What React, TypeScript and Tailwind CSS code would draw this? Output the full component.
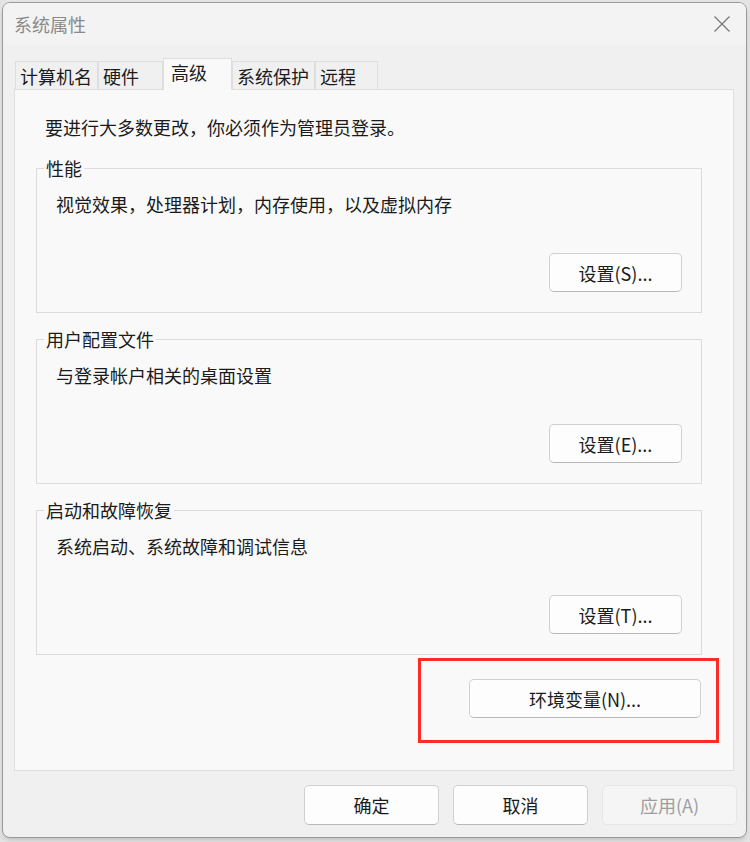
import React from "react";

const font = { fontFamily: '"Noto Sans CJK SC", "Microsoft YaHei", sans-serif' };

function WinButton({
  label,
  className = "",
  disabled = false,
}: {
  label: string;
  className?: string;
  disabled?: boolean;
}) {
  return (
    <button
      disabled={disabled}
      className={
        "flex items-center justify-center rounded-[5px] border text-[18px] leading-none " +
        (disabled
          ? "border-[#e6e6e6] bg-[#f5f5f5] text-[#9d9d9d] "
          : "border-[#d0d0d0] border-b-[#b8b8b8] bg-[#fdfdfd] text-[#1b1b1b] ") +
        className
      }
    >
      {label}
    </button>
  );
}

function Group({
  title,
  desc,
  button,
}: {
  title: string;
  desc: string;
  button: string;
}) {
  return (
    <fieldset className="w-[666px] border border-[#dcdcdc] px-0 pb-[20px] pt-0">
      <legend className="ml-[7px] px-[2px] text-[18px] leading-[24px] text-[#1b1b1b]">
        {title}
      </legend>
      <p className="ml-[19px] mt-[12px] text-[18px] leading-[24px] text-[#1b1b1b]">{desc}</p>
      <div className="mt-[37px] flex justify-end pr-[19px]">
        <WinButton label={button} className="h-[39px] w-[133px]" />
      </div>
    </fieldset>
  );
}

const tabs = ["计算机名", "硬件", "高级", "系统保护", "远程"];
const tabWidths = ["w-[83px]", "w-[65px]", "w-[69px]", "w-[83px]", "w-[63px]"];

export default function App() {
  return (
    <div className="min-h-[842px] w-[750px] bg-[#e4e4e4] pl-[2px] pt-[2px]" style={font}>
      <div className="flex h-[836px] w-[745px] flex-col overflow-hidden rounded-[8px] border border-[#9a9a9a] bg-[#f0f0f0] shadow-md">
        {/* title bar */}
        <div className="flex h-[42px] shrink-0 items-center justify-between bg-[#f3f3f3] pl-[11px] pr-[15px]">
          <span className="text-[18px] text-[#8a8a8a]">系统属性</span>
          <svg width="18" height="18" viewBox="0 0 18 18" className="text-[#7a7a7a]">
            <path d="M1.5 1.5 L16.5 16.5 M16.5 1.5 L1.5 16.5" stroke="currentColor" strokeWidth="1.3" />
          </svg>
        </div>

        {/* tabs */}
        <div className="mt-[13px] flex h-[31px] items-end pl-[12px]">
          {tabs.map((t, i) => {
            const active = i === 2;
            return (
              <div
                key={t}
                className={
                  "relative flex items-start border border-b-0 border-[#dedede] px-[4px] text-[18px] leading-[24px] text-[#1b1b1b] " +
                  tabWidths[i] +
                  (active
                    ? " z-10 -mb-px h-[32px] bg-[#f9f9f9] pl-[7px] pt-[1px]"
                    : " h-[28px] bg-[#f0f0f0] pt-[2px]")
                }
              >
                {t}
              </div>
            );
          })}
        </div>

        {/* panel */}
        <div className="relative ml-[11px] flex h-[682px] w-[720px] flex-col border border-[#dedede] bg-[#f9f9f9] pl-[21px]">
          <p className="mt-[25px] pl-[9px] text-[18px] leading-[24px] text-[#1b1b1b]">
            要进行大多数更改，你必须作为管理员登录。
          </p>
          <div className="mt-[17px] flex flex-col gap-[14px]">
            <Group title="性能" desc="视觉效果，处理器计划，内存使用，以及虚拟内存" button="设置(S)..." />
            <Group title="用户配置文件" desc="与登录帐户相关的桌面设置" button="设置(E)..." />
            <Group title="启动和故障恢复" desc="系统启动、系统故障和调试信息" button="设置(T)..." />
          </div>
          <div className="mt-[24px] flex w-[665px] justify-end">
            <WinButton label="环境变量(N)..." className="h-[39px] w-[232px]" />
          </div>
          <div className="pointer-events-none absolute left-[403px] top-[568px] h-[85px] w-[301px] border-[3px] border-[#ff2a2a]" />
        </div>

        {/* footer buttons */}
        <div className="mt-[14px] flex justify-end gap-[14px] pr-[9px]">
          <WinButton label="确定" className="h-[40px] w-[135px]" />
          <WinButton label="取消" className="h-[40px] w-[135px]" />
          <WinButton label="应用(A)" className="h-[40px] w-[135px]" disabled />
        </div>
      </div>
    </div>
  );
}
